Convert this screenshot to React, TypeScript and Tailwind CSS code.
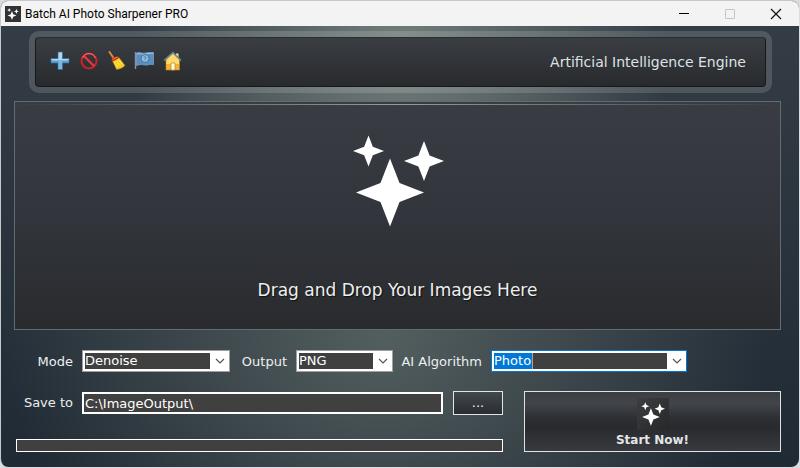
import { useState, type ReactNode } from "react";

const star = (cx: number, cy: number, r: number) => {
  const k = r * 0.28;
  return `M${cx} ${cy - r}L${cx + k} ${cy - k}L${cx + r} ${cy}L${cx + k} ${cy + k}L${cx} ${cy + r}L${cx - k} ${cy + k}L${cx - r} ${cy}L${cx - k} ${cy - k}Z`;
};

function Sparkles({ className }: { className: string }) {
  return (
    <svg viewBox="0 0 92 92" className={className} fill="#fff" aria-hidden="true">
      <path d={star(38, 57.5, 34)} />
      <path d={star(72, 26, 20)} />
      <path d={star(16.5, 16, 15.5)} />
    </svg>
  );
}

function PlusIcon() {
  return (
    <svg viewBox="0 0 20 20" className="size-5" aria-hidden="true">
      <path d="M8 1h4.500v6.500H19V12h-6.500v6.500H8V12H1V7.500h7z" fill="#5c9fd2" stroke="#39749f" strokeWidth=".7" />
      <path d="M8.500 1.500H12V8h6.500v1.500h-17V8h7z" fill="#add8ef" />
      <path d="M8.500 9.500H12V18H8.500z" fill="#7ab8e0" />
    </svg>
  );
}

function StopIcon() {
  return (
    <svg viewBox="0 0 20 20" className="size-5" fill="none" aria-hidden="true">
      <circle cx="11" cy="10" r="7.500" stroke="#d3202b" strokeWidth="2" />
      <path d="M6 5l10 10" stroke="#e63a40" strokeWidth="2.200" />
      <path d="M4.500 7a7 7 0 0 1 13 0" stroke="#f57b7b" strokeWidth=".9" />
    </svg>
  );
}

function BroomIcon() {
  return (
    <svg viewBox="0 0 20 20" className="size-5" aria-hidden="true">
      <path d="M3.500 1l4 6" stroke="#d98b36" strokeWidth="2" strokeLinecap="round" />
      <path d="M6.500 10L13 6.500l6 8c-2 2.200-5 3.700-8.500 4z" fill="#f7cb24" stroke="#b97912" strokeWidth=".5" />
      <path d="M8 11l3.500 5M10 10l4.500 5M12 8.500l4.500 5" stroke="#fff176" strokeWidth=".9" />
      <path d="M5.500 9c.5-2.500 3.500-4 6-3.500l1 2-6 3z" fill="#c92c22" />
      <path d="M6.500 8.500l5-2.500" stroke="#f7a14c" strokeWidth=".8" />
    </svg>
  );
}

function FlagIcon() {
  return (
    <svg viewBox="0 0 20 20" className="size-5" aria-hidden="true">
      <path d="M1.500 1v17" stroke="#8795a2" strokeWidth="1.400" />
      <path d="M2.500 2c3-1.500 5 1 9 0 3-.7 4-.5 8-.5v12c-4-.7-6 1-9 .5-3-.8-5-.5-8 .5z" fill="#5b8dbe" stroke="#7aacd5" strokeWidth=".7" />
      <path d="M3 3c3-1 6 1 9 0s5-.5 7-.5" stroke="#9bcbed" fill="none" />
      <circle cx="11" cy="7.500" r="4" fill="#8dbbdf" stroke="#47759f" />
      <path d="M9.800 6.300c1-1 3 0 1.700 1.400l-.8 1" stroke="#426d9e" fill="none" />
    </svg>
  );
}

function HomeIcon() {
  return (
    <svg viewBox="0 0 20 20" className="size-5" aria-hidden="true">
      <path d="M14 2.500h2.500v6H14z" fill="#f5e878" />
      <path d="M4 8.500L11 2l6.500 6.500V19H4z" fill="#f0b436" stroke="#c98819" strokeWidth=".6" />
      <path d="M4.500 9L11 3l6 6v4H4.500z" fill="#ffda71" />
      <path d="M9 12h4v7H9z" fill="#fffbe8" stroke="#c68d27" strokeWidth=".8" />
      <path d="M2 9.500L11 1.500l8 8" fill="none" stroke="#66899b" strokeWidth="1.600" />
    </svg>
  );
}

function Tool({ label, children }: { label: string; children: ReactNode }) {
  return (
    <button type="button" aria-label={label} className="flex size-5 items-center justify-center">
      {children}
    </button>
  );
}

type ComboProps = {
  id: string;
  label: string;
  options: string[];
  boxClass: string;
  selectClass: string;
  labelClass: string;
};

function Combo({ id, label, options, boxClass, selectClass, labelClass }: ComboProps) {
  return (
    <>
      <label htmlFor={id} className={labelClass}>{label}</label>
      <div className={`grid h-[22px] items-center border bg-white p-0.5 ${boxClass}`}>
        <select
          id={id}
          className={`col-start-1 row-start-1 h-4 w-full appearance-none text-[13px] leading-4 text-white outline-none ${selectClass}`}
        >
          {options.map((option) => <option key={option} className="bg-[#404040]">{option}</option>)}
        </select>
        <svg viewBox="0 0 10 6" className="pointer-events-none col-start-1 row-start-1 mr-0.5 h-1.5 w-2.5 justify-self-end" fill="none" stroke="#555" strokeWidth="1.200" aria-hidden="true">
          <path d="M1 1l4 4 4-4" />
        </svg>
      </div>
    </>
  );
}

const plainSelect = "bg-[linear-gradient(to_left,#fff_17px,#404040_17px)]";
const selectedText = "bg-[linear-gradient(to_right,#0078d7_38px,#b8a080_38px,#b8a080_39px,transparent_39px),linear-gradient(to_left,#fff_17px,#404040_17px)]";

export default function App() {
  const [folder, setFolder] = useState("C:\\ImageOutput\\");

  return (
    <div className="min-h-screen bg-[#d8dde2] font-['DejaVu_Sans',Verdana,sans-serif] text-[13px] text-[#eceff0]">
      <div className="mr-px flex min-h-[calc(100vh-1px)] flex-col overflow-hidden rounded-lg border-l border-t border-[#c5c9cd] bg-[radial-gradient(ellipse_at_50%_10%,#737d7b_0%,transparent_48%),radial-gradient(ellipse_at_48%_72%,#535e5f_0%,transparent_65%),linear-gradient(to_bottom,#353e47,#202a34)]">
        <header className="flex h-[25px] shrink-0 items-center bg-[#f3f3f3] pl-1 pr-4 text-black">
          <span className="mr-1 flex size-4 items-center justify-center bg-[#303234]">
            <Sparkles className="size-3" />
          </span>
          <h1 className="font-[Roboto,'Open_Sans',sans-serif] text-[12px] leading-4">Batch AI Photo Sharpener PRO</h1>
          <div className="ml-auto flex items-center gap-8">
            <button type="button" aria-label="Minimize" className="flex h-4 w-3.5 items-center justify-center">
              <span className="h-px w-2.5 bg-black" />
            </button>
            <button type="button" aria-label="Maximize" disabled className="flex h-4 w-3.5 items-center justify-center">
              <span className="size-2.5 rounded-[1px] border border-[#c4c4c4]" />
            </button>
            <button type="button" aria-label="Close" className="flex h-4 w-3.5 items-center justify-center">
              <svg viewBox="0 0 12 12" className="size-3" stroke="#111" strokeWidth="1.200" aria-hidden="true"><path d="M1 1l10 10M11 1L1 11" /></svg>
            </button>
          </div>
        </header>

        <main className="flex flex-1 flex-col pb-[15px] pl-[13px] pr-[18px] pt-[5px]">
          <div className="ml-[15px] mr-[9px] rounded-[10px] bg-white/14 p-1.5">
            <nav aria-label="Tools" className="flex h-[50px] items-center rounded-sm border border-[#16191b] border-t-[#292e31] bg-linear-to-b from-[#3a3e43] to-[#282a2d] pb-0.5 pl-3.5 pr-[19px]">
              <div className="flex items-center gap-2">
                <Tool label="Add images"><PlusIcon /></Tool>
                <Tool label="Remove image"><StopIcon /></Tool>
                <Tool label="Clear list"><BroomIcon /></Tool>
                <Tool label="Language"><FlagIcon /></Tool>
                <Tool label="Home"><HomeIcon /></Tool>
              </div>
              <span className="ml-auto pt-0.5 text-[14px] leading-4 text-[#dfe2e4]">Artificial Intelligence Engine</span>
            </nav>
          </div>

          <section className="mt-2 flex min-h-[229px] flex-1 flex-col items-center border border-[#646c70] bg-[linear-gradient(to_right,transparent,#949c9b_50%,transparent),linear-gradient(to_bottom,#393d43,#32353b_50%,#292b2e)] bg-[length:100%_1px,100%_100%] bg-[position:0_2px,0_0] bg-no-repeat pt-[33px]">
            <Sparkles className="size-[92px]" />
            <p className="mt-[51px] text-[17px] leading-6 [text-shadow:1px_1px_1px_#111]">Drag and Drop Your Images Here</p>
          </section>

          <form onSubmit={(event) => event.preventDefault()}>
            <div className="mt-5 flex items-center">
              <Combo id="mode" label="Mode" options={["Denoise", "Sharpen"]} labelClass="w-[68px] pr-[9px] pt-0.5 text-right leading-4" boxClass="w-[148px] border-[#a0a0a0]" selectClass={plainSelect} />
              <Combo id="output" label="Output" options={["PNG", "JPG"]} labelClass="w-[66px] pr-[9px] pt-0.5 text-right leading-4" boxClass="w-[97px] border-[#a0a0a0]" selectClass={plainSelect} />
              <Combo id="algorithm" label="AI Algorithm" options={["Photo", "Artwork"]} labelClass="w-[98px] pr-[9px] pt-0.5 text-right leading-4" boxClass="w-[196px] border-[#0078d7]" selectClass={selectedText} />
            </div>

            <div className="mt-[19px] flex gap-[21px]">
              <div className="flex min-w-0 flex-1 flex-col justify-between">
                <div className="flex items-center">
                  <label htmlFor="folder" className="w-[68px] pr-[9px] text-right leading-4">Save to</label>
                  <input id="folder" value={folder} onChange={(event) => setFolder(event.target.value)} className="h-[22px] min-w-0 flex-1 border-2 border-white bg-[#404040] px-px text-[13px] leading-4 text-white outline-none" />
                  <button type="button" aria-label="Browse folder" className="ml-2.5 h-6 w-[50px] border border-[#e2e5e7] bg-linear-to-b from-[#42484d] to-[#2a2d31] leading-4">...</button>
                </div>
                <div role="progressbar" aria-label="Progress" aria-valuenow={0} className="ml-0.5 h-[13px] border border-white bg-[#404040]" />
              </div>
              <button type="submit" className="flex h-[61px] w-[257px] shrink-0 flex-col items-center border border-[#dfe2e4] bg-[linear-gradient(to_bottom,#3b3e42,#414449_20%,#2c2e33_45%,#282a2e_60%,#373a3e)] pt-1.5 text-[12px] font-bold leading-4 text-[#e3e5e7]">
                <span className="flex size-8 items-center justify-center bg-linear-to-br from-[#3c3e40] to-[#26282a]"><Sparkles className="size-6" /></span>
                <span className="mt-0.5">Start Now!</span>
              </button>
            </div>
          </form>
        </main>
      </div>
    </div>
  );
}
